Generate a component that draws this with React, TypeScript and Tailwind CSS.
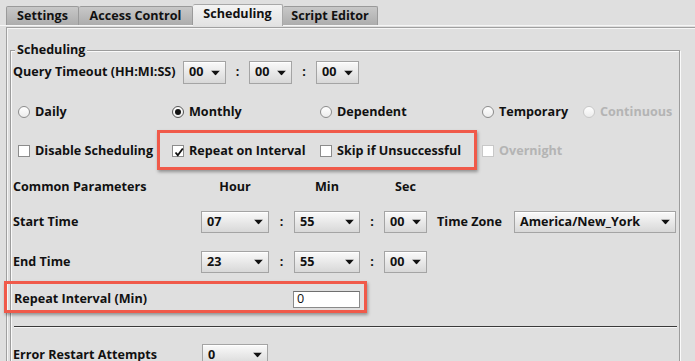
import React from "react";

function Arrow({ className = "" }: { className?: string }) {
  return (
    <svg width="9" height="5" viewBox="0 0 9 5" className={className}>
      <polygon points="0,0 9,0 4.5,5" fill="#111" />
    </svg>
  );
}

function Combo({ value, className = "" }: { value: string; className?: string }) {
  return (
    <div
      className={`relative flex items-center border border-[#a4a4a4] bg-linear-to-b from-[#fafafa] to-[#d8d8d8] shadow-[inset_0_1px_0_#fff] ${className}`}
    >
      <span className="pl-[5px] leading-none">{value}</span>
      <Arrow className="absolute right-[5px] top-1/2 -translate-y-1/2" />
    </div>
  );
}

function Radio({ checked = false, disabled = false }: { checked?: boolean; disabled?: boolean }) {
  return (
    <span
      className={`flex h-[12px] w-[12px] items-center justify-center rounded-full border bg-linear-to-b from-white to-[#ececec] ${
        disabled ? "border-[#c8c8c8]" : checked ? "border-[#555]" : "border-[#8c8c8c]"
      }`}
    >
      {checked && <span className="h-[6px] w-[6px] rounded-full bg-[#111]" />}
    </span>
  );
}

function Check({ checked = false, disabled = false }: { checked?: boolean; disabled?: boolean }) {
  return (
    <span
      className={`relative flex h-[12px] w-[12px] items-center justify-center border bg-white ${
        disabled ? "border-[#c8c8c8]" : "border-[#8c8c8c]"
      }`}
    >
      {checked && (
        <svg width="10" height="10" viewBox="0 0 10 10" className="absolute left-[1px] top-[1px]">
          <path d="M1.5 5.5 L3.8 8.2 L8.8 1.5" stroke="#111" strokeWidth="1.8" fill="none" />
        </svg>
      )}
    </span>
  );
}

function Colon({ className = "" }: { className?: string }) {
  return <div className={`flex justify-center ${className}`}>:</div>;
}

export default function App() {
  return (
    <div className="relative h-[361px] w-[695px] overflow-hidden bg-[#dfdfdf] font-['Open_Sans',sans-serif] text-[12.6px] font-bold text-[#111]">
      {/* Tab strip */}
      <div className="flex h-[26px] items-end border-b border-[#f6f6f6] pl-[6px]">
        <div className="flex h-[19px] w-[73px] items-center justify-center rounded-t-[2px] border border-b-0 border-[#9a9a9a] bg-linear-to-b from-[#c8c8c8] to-[#adadad]">
          Settings
        </div>
        <div className="flex h-[19px] w-[114px] items-center justify-center rounded-t-[2px] border border-b-0 border-l-0 border-[#9a9a9a] bg-linear-to-b from-[#c8c8c8] to-[#adadad]">
          Access Control
        </div>
        <div className="relative -mb-px flex h-[22px] w-[90px] items-center justify-center rounded-t-[2px] border border-b-0 border-l-0 border-[#a8a8a8] bg-linear-to-b from-[#f4f4f4] to-[#e2e2e2] pb-[3px]">
          Scheduling
        </div>
        <div className="flex h-[19px] w-[95px] items-center justify-center rounded-t-[2px] border border-b-0 border-l-0 border-[#9a9a9a] bg-linear-to-b from-[#c8c8c8] to-[#adadad]">
          Script Editor
        </div>
      </div>

      {/* Content pane */}
      <div className="ml-[6px] mt-[1px] h-[400px] border-l border-t border-[#a0a0a0] shadow-[inset_1px_1px_0_#f6f6f6]">
        {/* Group box */}
        <div className="relative ml-[3px] mt-[22px] h-[400px] w-[670px] border border-[#9c9c9c] shadow-[inset_1px_1px_0_#fafafa,1px_1px_0_#fafafa]">
          <div className="absolute -top-[9px] left-[4px] bg-[#dfdfdf] px-[2px] leading-[16px]">Scheduling</div>

          {/* Query timeout */}
          <div className="mt-[10px] flex h-[23px] items-center pl-[2px]">
            <div className="w-[170px]">Query Timeout (HH:MI:SS)</div>
            <Combo value="00" className="h-[23px] w-[43px]" />
            <Colon className="w-[23px]" />
            <Combo value="00" className="h-[23px] w-[43px]" />
            <Colon className="w-[24px]" />
            <Combo value="00" className="h-[23px] w-[43px]" />
          </div>

          {/* Radio row */}
          <div className="mt-[18px] flex h-[20px] items-center pl-[7px]">
            <div className="flex w-[154px] items-center gap-[5px]">
              <Radio />
              <span>Daily</span>
            </div>
            <div className="flex w-[148px] items-center gap-[5px]">
              <Radio checked />
              <span>Monthly</span>
            </div>
            <div className="flex w-[162px] items-center gap-[5px]">
              <Radio />
              <span>Dependent</span>
            </div>
            <div className="flex w-[101px] items-center gap-[5px]">
              <Radio />
              <span>Temporary</span>
            </div>
            <div className="flex items-center gap-[5px] text-[#b4b4b4]">
              <Radio disabled />
              <span>Continuous</span>
            </div>
          </div>

          {/* Checkbox row */}
          <div className="mt-[19px] flex h-[20px] items-center pl-[7px]">
            <div className="flex w-[154px] items-center gap-[5px]">
              <Check />
              <span>Disable Scheduling</span>
            </div>
            <div className="flex w-[148px] items-center gap-[5px]">
              <Check checked />
              <span>Repeat on Interval</span>
            </div>
            <div className="flex w-[162px] items-center gap-[5px]">
              <Check />
              <span>Skip if Unsuccessful</span>
            </div>
            <div className="flex items-center gap-[5px] text-[#b4b4b4]">
              <Check disabled />
              <span>Overnight</span>
            </div>
          </div>

          {/* Common parameters header */}
          <div className="mt-[16px] flex h-[20px] items-center pl-[2px]">
            <div className="w-[188px]">Common Parameters</div>
            <div className="w-[68px] text-center">Hour</div>
            <div className="w-[25px]" />
            <div className="w-[66px] text-center">Min</div>
            <div className="w-[24px]" />
            <div className="w-[43px] text-center">Sec</div>
          </div>

          {/* Start time */}
          <div className="mt-[14px] flex h-[22px] items-center pl-[2px]">
            <div className="w-[188px]">Start Time</div>
            <Combo value="07" className="h-[22px] w-[68px]" />
            <Colon className="w-[25px]" />
            <Combo value="55" className="h-[22px] w-[66px]" />
            <Colon className="w-[24px]" />
            <Combo value="00" className="h-[22px] w-[43px]" />
            <div className="w-[87px] pl-[10px]">Time Zone</div>
            <Combo value="America/New_York" className="h-[22px] w-[162px]" />
          </div>

          {/* End time */}
          <div className="mt-[18px] flex h-[22px] items-center pl-[2px]">
            <div className="w-[188px]">End Time</div>
            <Combo value="23" className="h-[22px] w-[68px]" />
            <Colon className="w-[25px]" />
            <Combo value="55" className="h-[22px] w-[66px]" />
            <Colon className="w-[24px]" />
            <Combo value="00" className="h-[22px] w-[43px]" />
          </div>

          {/* Repeat interval */}
          <div className="mt-[18px] flex h-[17px] items-center pl-[3px]">
            <div className="w-[279px]">Repeat Interval (Min)</div>
            <div className="flex h-[17px] w-[67px] items-center border border-[#8a8a8a] border-t-[#6f6f6f] bg-white pl-[3px] font-normal">
              0
            </div>
          </div>

          {/* Separator */}
          <div className="ml-[3px] mt-[18px] h-[2px] w-[663px] border-t border-b border-t-[#3a3a3a] border-b-[#f4f4f4]" />

          {/* Error restart */}
          <div className="mt-[16px] flex h-[22px] items-center pl-[2px]">
            <div className="w-[189px]">Error Restart Attempts</div>
            <Combo value="0" className="h-[22px] w-[66px]" />
          </div>
        </div>
      </div>

      {/* Annotation highlights */}
      <div className="pointer-events-none absolute left-[157px] top-[130px] h-[40px] w-[320px] border-[3px] border-[#f05a4a] shadow-[1px_2px_3px_rgba(0,0,0,0.35)]" />
      <div className="pointer-events-none absolute left-[4px] top-[281px] h-[32px] w-[363px] border-[3px] border-[#f05a4a] shadow-[1px_2px_3px_rgba(0,0,0,0.35)]" />
    </div>
  );
}
